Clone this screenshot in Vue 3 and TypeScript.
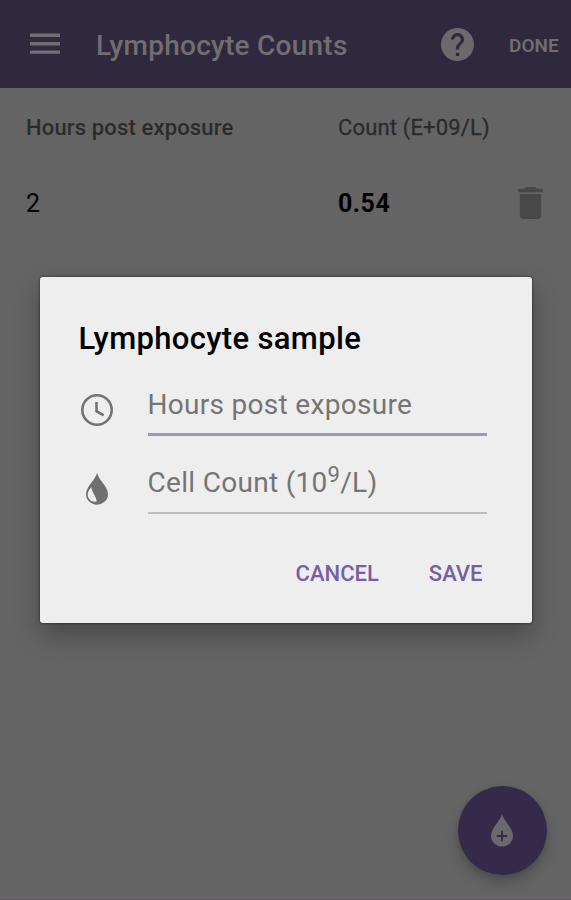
<script setup lang="ts">
import { ref } from 'vue'

interface Sample {
  hours: number
  count: number
}

const samples = ref<Sample[]>([{ hours: 2, count: 0.54 }])
</script>

<template>
  <div class="screen">
    <header class="bar">
      <svg class="menu" viewBox="0 0 30 22" aria-hidden="true">
        <path d="M0 0.5h30v3.4H0zM0 9h30v3.4H0zM0 17.4h30v3.4H0z" />
      </svg>
      <h1 class="title"><span>Lymphocyte Counts</span></h1>
      <svg class="help" viewBox="2 2 20 20" aria-hidden="true">
        <path d="M12 2C6.48 2 2 6.48 2 12s4.48 10 10 10 10-4.48 10-10S17.52 2 12 2zm1 17h-2v-2h2v2zm2.07-7.75-.9.92C13.45 12.9 13 13.5 13 15h-2v-.5c0-1.1.45-2.1 1.17-2.83l1.24-1.26c.37-.36.59-.86.59-1.41 0-1.1-.9-2-2-2s-2 .9-2 2H8c0-2.21 1.79-4 4-4s4 1.79 4 4c0 .88-.36 1.68-.93 2.25z" />
      </svg>
      <span class="done">DONE</span>
    </header>

    <main class="content">
      <div class="row head">
        <span>Hours post exposure</span>
        <span class="head-count">Count (E+09/L)</span>
      </div>
      <div v-for="sample in samples" :key="sample.hours" class="row data">
        <span>{{ sample.hours }}</span>
        <strong class="count">{{ sample.count }}</strong>
        <svg class="trash" viewBox="5 3 14 18" aria-hidden="true">
          <path d="M6 19c0 1.1.9 2 2 2h8c1.1 0 2-.9 2-2V7H6v12zM19 4h-3.5l-1-1h-5l-1 1H5v2h14V4z" />
        </svg>
      </div>
    </main>

    <div class="fab">
      <svg viewBox="0 0 22 33" aria-hidden="true">
        <path class="drop" d="M11 0C13 7.500 22 14 22 22a11 10.500 0 0 1-22 0C0 14 9 7.500 11 0z" />
        <path class="plus" d="M11 16.800v10.400M5.800 22h10.400" />
      </svg>
    </div>

    <div class="overlay">
      <section class="dialog" role="dialog">
        <h2 class="heading"><span>Lymphocyte sample</span></h2>
        <div class="field">
          <svg class="clock" viewBox="0 0 32 32" aria-hidden="true">
            <circle cx="16" cy="16" r="14.700" />
            <path d="M15.500 8v9.200l7.200 4.200" />
          </svg>
          <div class="input active"><span class="hours">Hours post exposure</span></div>
        </div>
        <div class="field">
          <svg class="blood" viewBox="0 0 22 32" aria-hidden="true">
            <path class="drop" d="M11 0C13 7.500 22 13.500 22 21.200a11 10.500 0 0 1-22 0C0 13.500 9 7.500 11 0z" />
            <path class="shine" d="M5.300 14.200C6 19.500 10.800 24 10.700 28.600 5.200 29.500 1.600 25.500 1.700 21.200 1.800 18.300 3.600 16.200 5.300 14.200z" />
          </svg>
          <div class="input"><span class="cells">Cell Count (10<sup>9</sup>/L)</span></div>
        </div>
        <footer class="actions">
          <span class="cancel">CANCEL</span>
          <span class="save">SAVE</span>
        </footer>
      </section>
    </div>
  </div>
</template>

<style>
body {
  margin: 0;
}
</style>

<style scoped>
.screen {
  position: relative;
  box-sizing: border-box;
  width: 571px;
  height: 900px;
  overflow: hidden;
  background: #646464;
  border-bottom: 1px solid #5d565f;
  font-family: Roboto, "Liberation Sans", sans-serif;
  color: #000;
}
span,
strong {
  white-space: nowrap;
}
.bar {
  display: flex;
  align-items: center;
  height: 88px;
  padding: 0 12px 0 30px;
  box-sizing: border-box;
  background: #30283d;
  color: #716d73;
}
.menu {
  width: 30px;
  height: 22px;
  fill: #716d73;
}
.title {
  flex: 1;
  margin: 4px 0 0 36px;
  font-size: 28px;
  font-weight: 500;
  line-height: 34px;
  letter-spacing: 0.25px;
}
.help {
  width: 33px;
  height: 33px;
  margin-right: 35px;
  fill: #6b696c;
}
.done {
  width: 50px;
  font-size: 19px;
  font-weight: 600;
  line-height: 24px;
  margin-top: 3px;
}
.row {
  display: grid;
  grid-template-columns: 312px 180px auto;
  align-items: center;
  padding-left: 26px;
}
.head {
  height: 78px;
  font-size: 22px;
  font-weight: 500;
  letter-spacing: 0.15px;
  color: #2b2b2b;
}
.head-count {
  font-weight: 400;
  -webkit-text-stroke: 0.3px #2b2b2b;
}
.data {
  height: 74px;
  font-size: 25px;
}
.count {
  font-weight: 700;
  letter-spacing: 0.5px;
}
.trash {
  width: 25px;
  height: 32px;
  fill: #484848;
}
.fab {
  position: absolute;
  left: 457.5px;
  top: 786px;
  display: flex;
  align-items: center;
  justify-content: center;
  width: 89px;
  height: 89px;
  border-radius: 50%;
  background: #352a49;
  box-shadow: 0 8px 14px rgba(0, 0, 0, 0.2), 0 2px 5px rgba(0, 0, 0, 0.1);
}
.fab svg {
  width: 22px;
  height: 33px;
}
.fab .drop {
  fill: #6b696e;
}
.plus {
  fill: none;
  stroke: #352a49;
  stroke-width: 2;
}
.overlay {
  position: absolute;
  inset: 0;
  display: flex;
  align-items: center;
  justify-content: center;
}
.dialog {
  box-sizing: border-box;
  width: 492px;
  height: 346px;
  padding: 43px 45px 0 39px;
  border-radius: 3px;
  background: #eee;
  box-shadow: 0 12px 26px rgba(0, 0, 0, 0.28), 0 0 3px rgba(0, 0, 0, 0.6);
}
.heading {
  margin: 0 0 16px;
  font-size: 31px;
  font-weight: 500;
  line-height: 38px;
  letter-spacing: 0.34px;
}
.field {
  display: flex;
  height: 78px;
}
.clock {
  width: 32px;
  height: 32px;
  margin: 20px 35px 0 2px;
  fill: none;
  stroke: #737373;
  stroke-width: 2.6;
}
.blood {
  width: 22px;
  height: 32px;
  margin: 21px 40px 0 7px;
}
.blood .drop {
  fill: #707070;
}
.shine {
  fill: #eee;
}
.input {
  box-sizing: border-box;
  width: 339px;
  height: 62px;
  padding-top: 14px;
  border-bottom: 2px solid #bdbdbd;
  font-size: 28px;
  line-height: 34px;
  letter-spacing: 0.3px;
  color: #757575;
}
.active {
  border-bottom: 3px solid #a198b8;
}
sup {
  font-size: 22px;
  line-height: 0;
  vertical-align: 10px;
}
.actions {
  display: flex;
  justify-content: flex-end;
  gap: 50px;
  margin-top: 31px;
  padding-right: 4px;
  font-size: 22px;
  font-weight: 500;
  line-height: 26px;
  color: #7560a5;
}
</style>
